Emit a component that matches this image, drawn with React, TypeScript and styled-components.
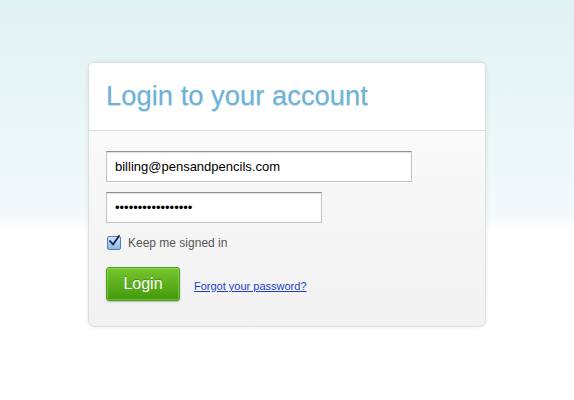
import React from "react";
import styled, { createGlobalStyle } from "styled-components";

const Global = createGlobalStyle`
  html, body { margin: 0; padding: 0; height: 100%; }
  body {
    font-family: "Liberation Sans", Arial, sans-serif;
    background: linear-gradient(to bottom, #e1f2f3 0px, #eaf6f7 120px, #f4fafb 218px, #ffffff 230px, #ffffff 100%);
    background-repeat: no-repeat;
    min-height: 400px;
  }
`;

const Page = styled.div`
  display: flex;
  justify-content: center;
  padding-top: 62px;
`;

const Card = styled.div`
  width: 396px;
  border: 1px solid #dcdfe0;
  border-radius: 6px;
  background: linear-gradient(to bottom, #ffffff 0%, #f8f8f8 40%, #f2f2f2 100%);
  box-shadow: 0 0 4px rgba(0, 0, 0, 0.08);
  overflow: hidden;
`;

const Header = styled.div`
  height: 67px;
  background: #ffffff;
  border-bottom: 1px solid #dedede;
  padding: 0 17px;
  display: flex;
  align-items: center;
`;

const Title = styled.h1`
  margin: 0;
  font-family: "Liberation Sans", Arial, sans-serif;
  font-weight: normal;
  font-size: 27.4px;
  color: #6cb3d8;
  text-shadow: 0 1px 1px rgba(60, 110, 140, 0.25);
  position: relative;
  top: -1px;
`;

const Body = styled.form`
  padding: 20px 17px 25px;
  display: flex;
  flex-direction: column;
  align-items: flex-start;
`;

const Input = styled.input<{ $w: number }>`
  box-sizing: border-box;
  width: ${(p) => p.$w}px;
  height: 31px;
  border: 1px solid #c4c4c4;
  border-top-color: #8f8f8f;
  box-shadow: inset 0 1px 1px rgba(0, 0, 0, 0.12);
  background: #fff;
  font-family: "Liberation Sans", Arial, sans-serif;
  font-size: 13px;
  color: #000;
  padding: 0 8px;
  margin: 0 0 10px;
  outline: none;
`;

const CheckRow = styled.label`
  display: flex;
  align-items: center;
  gap: 7px;
  margin-top: 3px;
  padding-left: 1px;
  font-size: 12px;
  color: #555;
`;

const Box = styled.span`
  width: 12px;
  height: 12px;
  border: 1px solid #5a7fa8;
  border-radius: 2px;
  background: linear-gradient(to bottom, #cfe4fa, #8bb7e6);
  display: flex;
  align-items: center;
  justify-content: center;
  position: relative;
`;

const Actions = styled.div`
  display: flex;
  align-items: center;
  gap: 14px;
  margin-top: 17px;
`;

const Button = styled.button`
  width: 74px;
  height: 34px;
  border: 1px solid #4d9e1d;
  border-radius: 3px;
  background: linear-gradient(to bottom, #76c630 0%, #5cb01b 50%, #43980a 100%);
  box-shadow: inset 0 0 0 1px rgba(160, 230, 110, 0.45), 0 1px 2px rgba(0, 0, 0, 0.25);
  color: #fff;
  font-family: "Liberation Sans", Arial, sans-serif;
  font-size: 16px;
  text-shadow: 0 -1px 0 rgba(0, 60, 0, 0.35);
  padding: 0;
  cursor: pointer;
`;

const Link = styled.a`
  font-size: 11px;
  color: #1c3fcf;
  text-decoration: underline;
  position: relative;
  top: 2px;
`;

export default function App() {
  return (
    <>
      <Global />
      <Page>
        <Card>
          <Header>
            <Title>Login to your account</Title>
          </Header>
          <Body onSubmit={(e) => e.preventDefault()}>
            <Input $w={306} type="text" defaultValue="billing@pensandpencils.com" />
            <Input $w={216} type="password" defaultValue="passwordpassword1" />
            <CheckRow>
              <Box>
                <svg width="12" height="12" viewBox="0 0 12 12" style={{ position: "absolute", left: 0, top: -2 }}>
                  <path d="M2 6 L5 9.5 L11 1" fill="none" stroke="#10224a" strokeWidth="1.8" strokeLinecap="round" strokeLinejoin="round" />
                </svg>
              </Box>
              Keep me signed in
            </CheckRow>
            <Actions>
              <Button type="submit">Login</Button>
              <Link href="#">Forgot your password?</Link>
            </Actions>
          </Body>
        </Card>
      </Page>
    </>
  );
}
